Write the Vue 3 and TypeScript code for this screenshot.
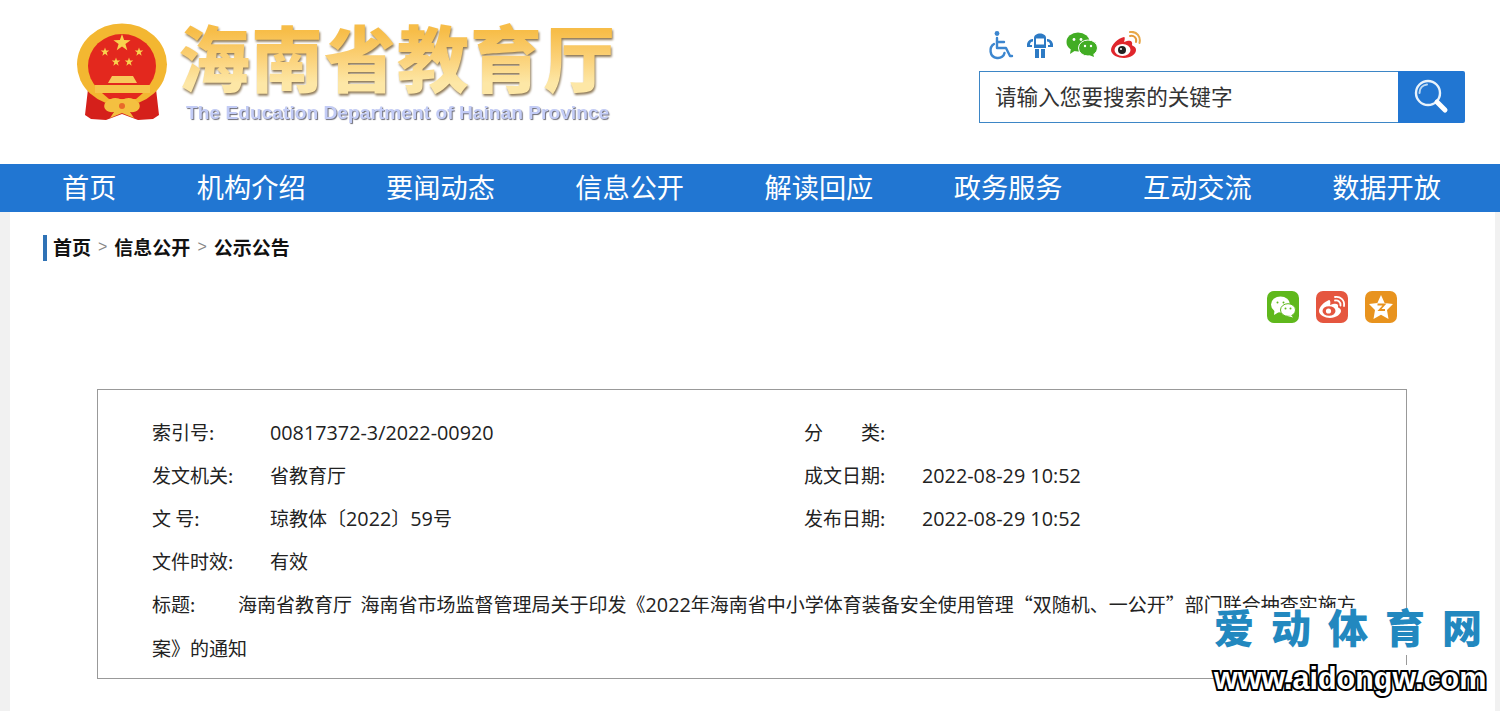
<script setup lang="ts">
const navItems: string[] = ['首页', '机构介绍', '要闻动态', '信息公开', '解读回应', '政务服务', '互动交流', '数据开放']
const rows: { label: string; value: string; label2?: string; value2?: string }[] = [
  { label: '索引号:', value: '00817372-3/2022-00920', label2: '分　　类:', value2: '' },
  { label: '发文机关:', value: '省教育厅', label2: '成文日期:', value2: '2022-08-29 10:52' },
  { label: '文 号:', value: '琼教体〔2022〕59号', label2: '发布日期:', value2: '2022-08-29 10:52' },
  { label: '文件时效:', value: '有效' }
]
const title = '海南省教育厅\u00a0\u00a0海南省市场监督管理局关于印发《2022年海南省中小学体育装备安全使用管理“双随机、一公开”部门联合抽查实施方案》的通知'

function runs(text: string): { t: string; num: boolean }[] {
  return (text.match(/[0-9\-\/: ]+|[^0-9\-\/: ]+/g) ?? []).map((t) => ({ t, num: /^[0-9\-\/: ]+$/.test(t) }))
}

function star(cx: number, cy: number, r: number): string {
  const pts: string[] = []
  for (let i = 0; i < 10; i++) {
    const rad = i % 2 === 0 ? r : r * 0.4
    const a = -Math.PI / 2 + (i * Math.PI) / 5
    pts.push(`${(cx + rad * Math.cos(a)).toFixed(2)} ${(cy + rad * Math.sin(a)).toFixed(2)}`)
  }
  return 'M' + pts.join(' L') + ' Z'
}
const stars: string[] = [star(46, 20, 9), star(29, 29, 4.5), star(63, 29, 4.5), star(40, 39, 4.5), star(53, 39, 4.5)]
</script>

<template>
  <div class="page">
    <header class="top">
      <div class="logo">
        <svg class="emblem" width="92" height="100" viewBox="0 0 92 100">
          <path d="M12 66 L9 92 L15 96 L30 97 L46 91 L62 97 L77 96 L83 92 L80 66 Z" fill="#d5201b" />
          <ellipse cx="46" cy="41.500" rx="45" ry="41" fill="#f3b731" />
          <ellipse cx="46" cy="43" rx="34" ry="32" fill="#e3281e" />
          <path d="M32 60 L36 53 H57 L61 60 Z" fill="#f8c95a" />
          <path d="M19 62 H74 L74 70 H19 Z" fill="#f6c44a" />
          <path d="M26 70 H67 L60 76 H33 Z" fill="#e3281e" />
          <path v-for="(d, i) in stars" :key="i" :d="d" fill="#f8d24e" />
          <path d="M29 80 C35 74 41 74 46 77 C51 74 57 74 63 80 C66 86 60 90 54 89 L58 95 L46 90 L34 95 L38 89 C32 90 26 86 29 80 Z" fill="#f4c040" />
          <circle cx="46" cy="83" r="3" fill="#e86a2a" />
        </svg>
        <div class="brand">
          <div class="brand-cn">海南省教育厅</div>
          <div class="brand-en">The Education Department of Hainan Province</div>
        </div>
      </div>
      <div class="tools">
        <div class="tool-icons">
          <svg width="26" height="30" viewBox="0 0 26 30" fill="none" stroke="#3c86cf" stroke-width="2.400" stroke-linecap="round" stroke-linejoin="round">
            <circle cx="9" cy="3.500" r="2.400" fill="#3c86cf" stroke="none" />
            <path d="M9 8 V18 H18 L22 26 H24" />
            <path d="M9 12 H16" />
            <path d="M6 14 C1 17 1 27 9 28 C13 28.500 16 26 16.500 23" />
          </svg>
          <svg width="28" height="27" viewBox="0 0 28 27" fill="#2d7ac4">
            <path d="M8 6 C8 0 20 0 20 6 V16 H8 Z" />
            <path d="M1 12 C2 8 5 7 7 7 V9.500 C5 9.500 4 11 4 13 H6 V15 H1 Z M27 12 C26 8 23 7 21 7 V9.500 C23 9.500 24 11 24 13 H22 V15 H27 Z" />
            <rect x="10" y="6.500" width="8" height="6" fill="#fff" />
            <rect x="9" y="17" width="4" height="9" />
            <rect x="15" y="17" width="4" height="9" />
          </svg>
          <svg width="32" height="26" viewBox="0 0 32 26">
            <ellipse cx="12" cy="10" rx="11.500" ry="9.500" fill="#42ad24" />
            <path d="M5 16 L4 22 L10 18 Z" fill="#42ad24" />
            <ellipse cx="22" cy="16" rx="9.500" ry="8" fill="#42ad24" stroke="#fff" stroke-width="1" />
            <path d="M27 21 L28 25 L23 23 Z" fill="#42ad24" />
            <circle cx="8" cy="7.500" r="1.400" fill="#fff" />
            <circle cx="15" cy="7.500" r="1.400" fill="#fff" />
            <circle cx="19" cy="14" r="1.200" fill="#fff" />
            <circle cx="25" cy="14" r="1.200" fill="#fff" />
          </svg>
          <svg width="32" height="28" viewBox="0 0 32 28" fill="none">
            <path d="M14 6 C8 7 1 14 1 19 C1 24 8 27 14 27 C21 27 26 23 26 19 C26 15 22 15 22 14 C23 10 20 9 17 10 L14 11 C15 8 15 6 14 6 Z" fill="#e0262c" />
            <ellipse cx="12.500" cy="19" rx="8" ry="6" fill="#fff" />
            <circle cx="12" cy="19" r="4" fill="#222" />
            <circle cx="11" cy="18" r="1" fill="#fff" />
            <path d="M20 5 C24 4 27 7 26 11" stroke="#e59a3a" stroke-width="2" stroke-linecap="round" />
            <path d="M20 1 C27 0 31 6 29.500 12" stroke="#e8a94a" stroke-width="2" stroke-linecap="round" />
          </svg>
        </div>
        <div class="search">
          <div class="search-input">请输入您要搜索的关键字</div>
          <div class="search-btn">
            <svg width="36" height="36" viewBox="0 0 36 36" fill="none">
              <circle cx="14" cy="14" r="12" stroke="#e8f2fb" stroke-width="2.400" />
              <path d="M5.500 14 C5.500 9 9 6 13 5.500" stroke="#bcd8f1" stroke-width="2" stroke-linecap="round" />
              <path d="M23 23 L31 31" stroke="#fff" stroke-width="5" stroke-linecap="round" />
            </svg>
          </div>
        </div>
      </div>
    </header>

    <nav class="nav">
      <a v-for="item in navItems" :key="item" class="nav-item">{{ item }}</a>
    </nav>

    <main class="sheet">
      <div class="crumbs">
        <b>首页</b><span class="sep">&gt;</span><b>信息公开</b><span class="sep">&gt;</span><b>公示公告</b>
      </div>

      <div class="share">
        <span class="share-icon wx">
          <svg width="26" height="22" viewBox="0 0 26 22">
            <ellipse cx="10.500" cy="8.500" rx="9.500" ry="8" fill="#fff" />
            <path d="M4.500 14 L4 19 L9 16 Z" fill="#fff" />
            <ellipse cx="18" cy="14" rx="7.500" ry="6.300" fill="#fff" stroke="#5fb81c" stroke-width="1" />
            <path d="M21 19 L23 21.500 L17.500 20 Z" fill="#fff" />
            <circle cx="7.500" cy="6.500" r="1" fill="#5fb81c" />
            <circle cx="13.500" cy="6.500" r="1" fill="#5fb81c" />
            <circle cx="15.500" cy="12.500" r="1" fill="#5fb81c" />
            <circle cx="20.500" cy="12.500" r="1" fill="#5fb81c" />
          </svg>
        </span>
        <span class="share-icon wb">
          <svg width="28" height="24" viewBox="0 0 28 24" fill="none">
            <path d="M11 5 C6 7 1 12 1 16 C1 20 7 23 12 23 C18 23 23 19 23 16 C23 13 20 13 20 12 C21 9 18 8 15 9 L12 10 C13 7 12 5 11 5 Z" fill="#fff" />
            <ellipse cx="11" cy="16" rx="6.500" ry="4.800" fill="#e5563f" />
            <circle cx="10.500" cy="16" r="2.600" fill="#fff" />
            <path d="M17 5.500 C20 5 23 7 22.500 10.500" stroke="#fff" stroke-width="1.800" stroke-linecap="round" />
            <path d="M17 2 C22 1 27 5 26 11" stroke="#fff" stroke-width="1.800" stroke-linecap="round" />
          </svg>
        </span>
        <span class="share-icon qz">
          <svg width="26" height="26" viewBox="0 0 26 26">
            <path d="M13 1 L16.600 9 L25 10 L19 16 L20.500 25 L13 20.800 L5.500 25 L7 16 L1 10 L9.400 9 Z" fill="#fff" />
            <path d="M9.500 10.500 H16.500 L11.500 16 H17" stroke="#e8931e" stroke-width="1.800" fill="none" />
          </svg>
        </span>
      </div>

      <section class="meta">
        <div v-for="row in rows" :key="row.label" class="meta-row">
          <div class="cell">
            <span class="cell-label">{{ row.label }}</span>
            <span class="cell-value"><span v-for="(r, i) in runs(row.value)" :key="i" :class="{ num: r.num }">{{ r.t }}</span></span>
          </div>
          <div v-if="row.label2" class="cell">
            <span class="cell-label">{{ row.label2 }}</span>
            <span class="cell-value"><span v-for="(r, i) in runs(row.value2 ?? '')" :key="i" :class="{ num: r.num }">{{ r.t }}</span></span>
          </div>
        </div>
        <div class="meta-title"><span class="title-label">标题:</span><span v-for="(r, i) in runs(title)" :key="i" :class="{ num: r.num }">{{ r.t }}</span></div>
      </section>
    </main>

    <div class="watermark">
      <div class="wm-cn">爱动体育网</div>
      <div class="wm-url">www.aidongw.com</div>
    </div>
  </div>
</template>

<style>
html, body { margin: 0; padding: 0; background: #fff; overflow: hidden; }
</style>

<style scoped>
.page {
  position: relative;
  width: 1500px;
  height: 711px;
  overflow: hidden;
  background: #f1f1f1;
  font-family: "Noto Sans CJK SC", "Liberation Sans", sans-serif;
  color: #222;
}
.top {
  height: 164px;
  background: #fff;
  display: flex;
  justify-content: space-between;
  box-sizing: border-box;
}
.logo {
  display: flex;
  align-items: flex-start;
  padding: 23px 0 0 76px;
  filter: blur(0.35px);
}
.emblem { display: block; }
.brand { margin-left: 10px; margin-top: -8px; }
.brand-cn {
  font-family: "Noto Sans CJK SC", sans-serif;
  font-size: 72px;
  line-height: 80px;
  font-weight: 900;
  width: 445px;
  letter-spacing: 1px;
  white-space: nowrap;
  background: linear-gradient(180deg, #f7bd48 20%, #fbd27a 55%, #fde7a6 85%);
  -webkit-background-clip: text;
  background-clip: text;
  color: transparent;
  filter: drop-shadow(1px 2px 1px #8f7a58);
}
.brand-en {
  margin: 7px 0 0 8px;
  font-family: "Liberation Sans", sans-serif;
  font-size: 19.200px;
  line-height: 22px;
  font-weight: 700;
  color: #c3ccf6;
  white-space: nowrap;
  text-shadow: 1px 1px 1px #6d6d78;
}
.tools { width: 521px; padding-top: 28px; box-sizing: border-box; }
.tool-icons {
  display: flex;
  align-items: center;
  gap: 12px;
  padding-left: 9px;
  height: 34px;
}
.search {
  display: flex;
  margin-top: 9px;
  width: 486px;
  height: 52px;
}
.search-input {
  flex: 1;
  box-sizing: border-box;
  border: 1.500px solid #3d86c6;
  border-right: 0;
  background: #fff;
  font-size: 21.600px;
  line-height: 47px;
  padding-left: 15px;
  color: #333;
}
.search-btn {
  width: 67px;
  background: #2176d2;
  border-radius: 0 2px 2px 0;
  display: flex;
  align-items: center;
  justify-content: center;
}
.nav {
  height: 48px;
  background: #2176d2;
  display: flex;
  justify-content: space-between;
  padding: 0 59px 0 62px;
}
.nav-item {
  font-size: 27.200px;
  line-height: 45px;
  color: #fff;
  white-space: nowrap;
}
.sheet {
  margin: 0 5px 0 10px;
  height: 499px;
  background: #fff;
  padding: 23px 0 0 33px;
  box-sizing: border-box;
}
.crumbs {
  display: flex;
  align-items: center;
  height: 26px;
  box-sizing: border-box;
  padding: 0 0 3px 6px;
  border-left: 4px solid #2f72b5;
  font-size: 19px;
  color: #111;
}
.crumbs b { font-weight: 700; }
.sep {
  margin: 0 7px;
  font-size: 16px;
  color: #888;
  font-family: "Liberation Sans", sans-serif;
}
.share {
  display: flex;
  justify-content: flex-end;
  gap: 17px;
  margin-top: 30px;
  padding-right: 98px;
}
.share-icon {
  width: 32px;
  height: 32px;
  border-radius: 7px;
  display: flex;
  align-items: center;
  justify-content: center;
}
.wx { background: #5fb81c; }
.wb { background: #e5563f; }
.qz { background: #e8931e; }
.meta {
  margin: 66px 0 0 54px;
  width: 1310px;
  height: 290px;
  box-sizing: border-box;
  border: 1px solid #999;
  padding: 20px 45px 0 54px;
  font-size: 19px;
  line-height: 43px;
  color: #222;
}
.num { font-family: "Open Sans", sans-serif; font-size: 19.800px; }
.meta-row { display: flex; height: 43px; }
.cell { display: flex; width: 652px; flex: none; }
.cell-label { width: 118px; flex: none; white-space: pre; }
.cell-value { white-space: nowrap; }
.title-label { display: inline-block; width: 86px; }
.watermark {
  position: absolute;
  left: 1214px;
  top: 608px;
  width: 274px;
  display: flex;
  flex-direction: column;
  gap: 10px;
}
.wm-cn {
  height: 47px;
  background: #fff;
  font-family: "Noto Sans CJK SC", sans-serif;
  font-size: 40px;
  line-height: 37px;
  font-weight: 900;
  letter-spacing: 17px;
  color: #2288bf;
  white-space: nowrap;
}
.wm-url {
  height: 27px;
  background: #fff;
  font-family: "Liberation Sans", sans-serif;
  font-size: 30.500px;
  line-height: 27px;
  font-weight: 700;
  color: #fff;
  white-space: nowrap;
  -webkit-text-stroke: 4px #000;
  paint-order: stroke fill;
}
</style>
